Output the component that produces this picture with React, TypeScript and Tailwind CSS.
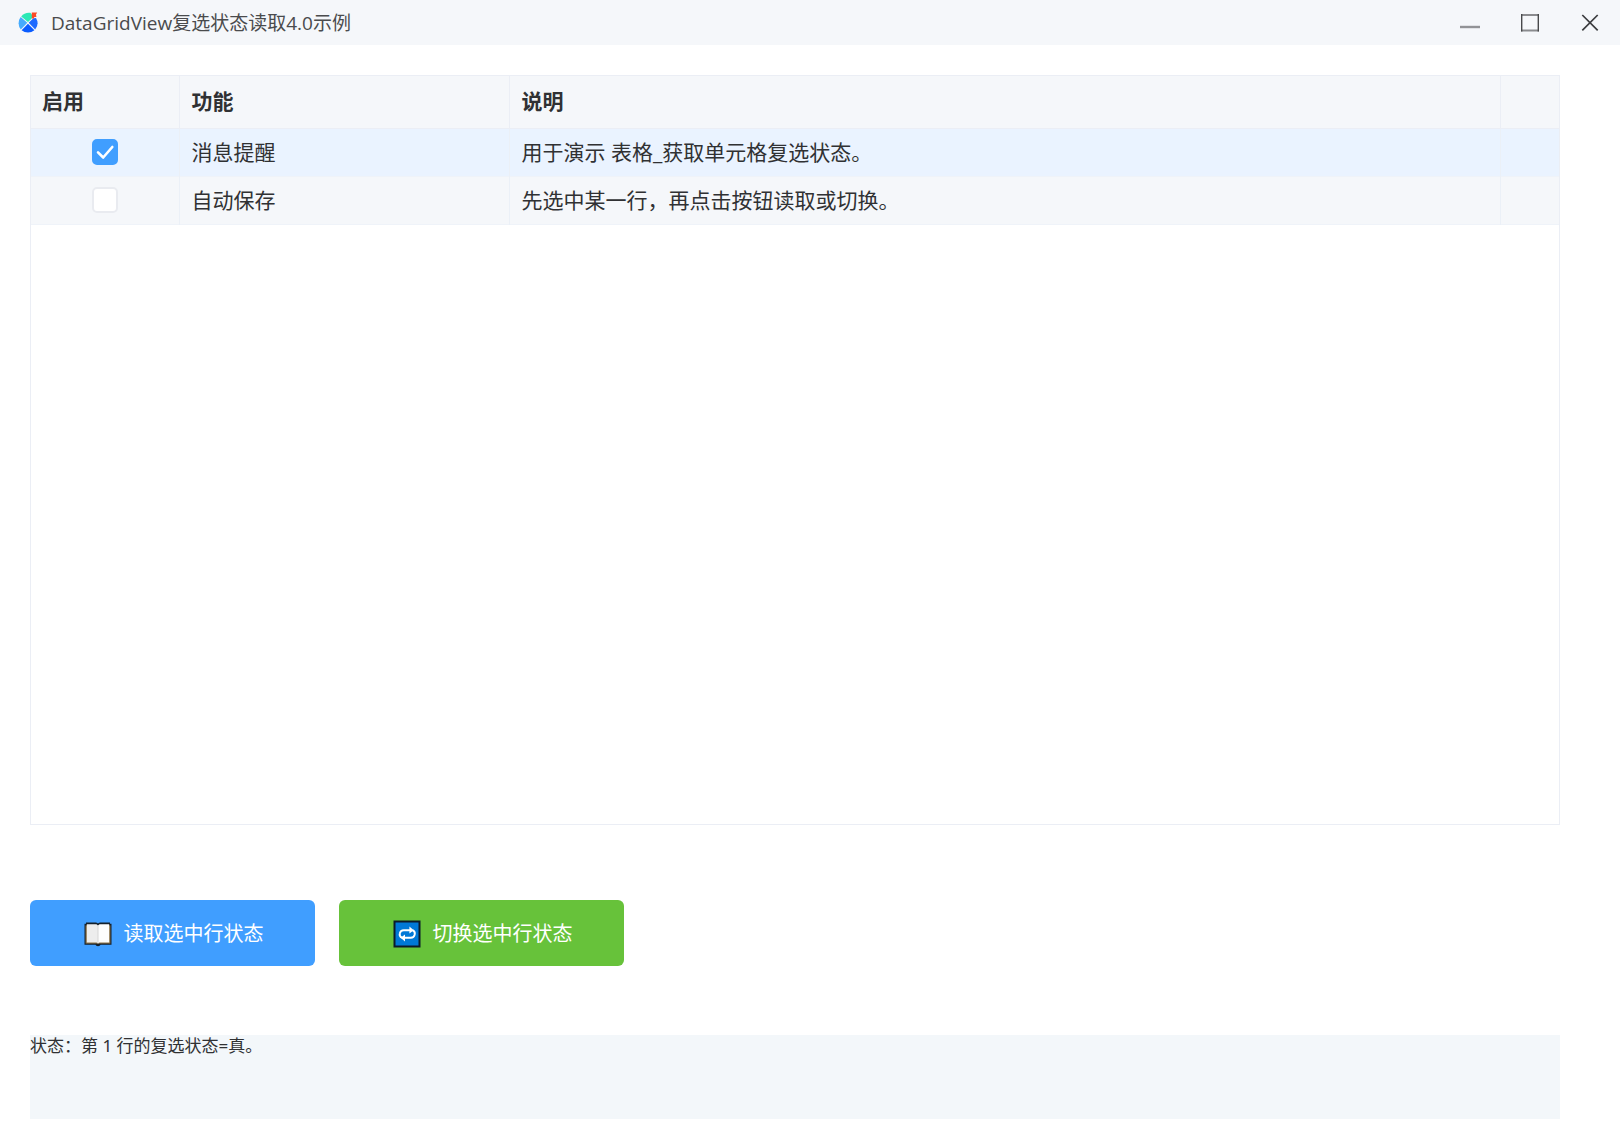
import React, { useState } from "react";

interface Row {
  enabled: boolean;
  name: string;
  desc: string;
}

const initialRows: Row[] = [
  { enabled: true, name: "消息提醒", desc: "用于演示 表格_获取单元格复选状态。" },
  { enabled: false, name: "自动保存", desc: "先选中某一行，再点击按钮读取或切换。" },
];

function AppLogo() {
  return (
    <svg className="w-[22px] h-[22px]" viewBox="0 0 22 22" aria-hidden="true">
      <path d="M11 10 4.200 4.400A10 10 0 0 1 13.400 .8L15.200 3v3z" fill="#2be8b5" />
      <path d="M10.300 10.800 3.800 17.400A10 10 0 0 1 3.700 5z" fill="#45abfd" />
      <path d="M11.700 10.800 16.400 6.200 19 6A10 10 0 0 1 18.200 17.400z" fill="#1f6bff" />
      <path d="M11 11.700 17.400 18.200A10 10 0 0 1 4.600 18.200z" fill="#0a5cff" />
      <path d="M14.800 .6h5.400l-1.200 2 .4 2.400h-2.200v1.400h-2.400z" fill="#fb4a26" />
    </svg>
  );
}

function BookIcon() {
  return (
    <svg className="w-7 h-7" viewBox="0 0 28 28" aria-hidden="true">
      <path
        d="M.5 3.800h1.500V2.600h9.600c1 0 1.900.3 2.400.8.5-.5 1.400-.8 2.400-.8H26v1.200h1.500v21h-11c-.3.900-1.200 1.400-2.500 1.400s-2.200-.5-2.500-1.400H.5z"
        fill="#14202c"
      />
      <path d="M1.600 5.400h24.800v18.200H1.600z" fill="#8a7248" />
      <path d="M2.800 4.200h8.600c1.500 0 2.300.6 2.600 1.600v17.800c-.4-.7-1.200-1.100-2.600-1.100H2.800z" fill="#ededed" />
      <path d="M25.200 4.200h-8.600c-1.500 0-2.300.6-2.600 1.600v17.800c.4-.7 1.200-1.100 2.600-1.100h8.600z" fill="#fdfdfd" />
      <path d="M14 5.800v17.400" stroke="#d5d5d5" strokeWidth="1" />
    </svg>
  );
}

function RepeatIcon() {
  return (
    <svg className="w-7 h-7" viewBox="0 0 28 28" fill="none" aria-hidden="true">
      <rect x="1.500" y="1.500" width="25" height="25" fill="#0078d7" stroke="#0b1a2a" strokeWidth="2" />
      <path
        d="M9 17.800c-2.200-1.200-2.600-3-2.200-4.400.4-1.800 1.800-3.200 4-3.200h7M19.500 10.200c2.200 1.200 2.600 3 2.200 4.400-.4 1.800-1.800 3.200-4 3.200h-7"
        stroke="#fff"
        strokeWidth="1.900"
      />
      <path d="M16.400 6.400 20.800 10.200 16.400 13.600zM12 14.400 7.600 17.800 12 21.600z" fill="#fff" />
    </svg>
  );
}

export default function App() {
  const [rows, setRows] = useState(initialRows);
  const [selected, setSelected] = useState(0);
  const [status, setStatus] = useState("状态：第 1 行的复选状态=真。");

  const report = (index: number, enabled: boolean) => {
    setStatus(`状态：第 ${index + 1} 行的复选状态=${enabled ? "真" : "假"}。`);
  };

  const toggle = (index: number) => {
    setRows(rows.map((row, i) => (i === index ? { ...row, enabled: !row.enabled } : row)));
  };

  const handleToggle = () => {
    toggle(selected);
    report(selected, !rows[selected].enabled);
  };

  return (
    <div className="min-h-screen flex flex-col bg-white text-[#303133] font-['Noto_Sans','Noto_Sans_CJK_SC',sans-serif]">
      <header className="h-[45px] flex items-center justify-between bg-[#f5f7fa] pl-[17px]">
        <div className="flex items-center gap-3">
          <AppLogo />
          <h1 className="text-[19px] leading-7 text-[#4a4b4d] font-['Open_Sans','Noto_Sans_CJK_SC',sans-serif]">
            DataGridView复选状态读取4.0示例
          </h1>
        </div>
        <div className="flex text-[#303133]">
          <button aria-label="最小化" className="w-[60px] h-[45px] flex items-center justify-center hover:bg-gray-200">
            <svg className="w-6 h-6" viewBox="0 0 24 24">
              <path d="M2 16h20" stroke="#929396" strokeWidth="2.400" />
            </svg>
          </button>
          <button aria-label="最大化" className="w-[60px] h-[45px] flex items-center justify-center hover:bg-gray-200">
            <svg className="w-6 h-6" viewBox="0 0 24 24" fill="none">
              <path d="M3 4h18M3 19.500h18" stroke="#8a8b8e" strokeWidth="2" />
              <path d="M3.700 3v17.500M20.300 3v17.500" stroke="#48494b" strokeWidth="1.400" />
            </svg>
          </button>
          <button aria-label="关闭" className="w-[60px] h-[45px] flex items-center justify-center hover:bg-red-200">
            <svg className="w-6 h-6" viewBox="0 0 24 24" fill="none">
              <path d="M4.300 4l15.400 15.400M19.700 4L4.300 19.400" stroke="#3c3d3f" strokeWidth="1.700" />
            </svg>
          </button>
        </div>
      </header>

      <main className="flex-1 flex flex-col pt-[30px] pb-[21px] pl-[30px] pr-[60px]">
        <div className="flex-1 border border-[#ebeef5]">
          <table className="w-full table-fixed border-collapse text-left text-[21px] leading-7">
            <colgroup>
              <col className="w-[148px]" />
              <col className="w-[330px]" />
              <col />
              <col className="w-[59px]" />
            </colgroup>
            <thead>
              <tr className="h-[52px] bg-[#f5f7fa] border-b border-[#ebeef5]">
                <th className="px-[11px] pb-0.5 font-bold border-r border-[#ebeef5]">启用</th>
                <th className="px-3 pb-0.5 font-bold border-r border-[#ebeef5]">功能</th>
                <th className="px-3 pb-0.5 font-bold border-r border-[#ebeef5]">说明</th>
                <td />
              </tr>
            </thead>
            <tbody>
              {rows.map((row, i) => (
                <tr
                  key={row.name}
                  onClick={() => setSelected(i)}
                  className={`h-[48px] border-b border-[#eff3f9] ${i === selected ? "bg-[#eaf3ff]" : "bg-[#f5f7fa]"}`}
                >
                  <td className="border-r border-[#ebf0f7]">
                    <label className="relative block w-[26px] h-[26px] mx-auto">
                      <input
                        type="checkbox"
                        aria-label={row.name}
                        checked={row.enabled}
                        onChange={() => toggle(i)}
                        className="peer block appearance-none w-[26px] h-[26px] rounded-[5px] border-2 border-[#e9ebf0] bg-white checked:bg-[#409eff] checked:border-[#409eff]"
                      />
                      <svg
                        className="absolute inset-0 w-[26px] h-[26px] pointer-events-none opacity-0 peer-checked:opacity-100"
                        viewBox="0 0 26 26"
                        fill="none"
                      >
                        <path d="M6 13.300l5.200 5.200L20.300 8" stroke="#fff" strokeWidth="2.600" strokeLinecap="round" strokeLinejoin="round" />
                      </svg>
                    </label>
                  </td>
                  <td className="px-3 border-r border-[#ebf0f7]">{row.name}</td>
                  <td className="px-3 border-r border-[#ebf0f7]">{row.desc}</td>
                  <td />
                </tr>
              ))}
            </tbody>
          </table>
        </div>

        <div className="mt-[75px] flex gap-6 text-[20px] text-white">
          <button
            onClick={() => report(selected, rows[selected].enabled)}
            className="w-[285px] h-[66px] pl-0.5 pt-0.5 flex items-center justify-center gap-3 rounded-md bg-[#409eff] hover:bg-[#66b1ff]"
          >
            <BookIcon />
            读取选中行状态
          </button>
          <button
            onClick={handleToggle}
            className="w-[285px] h-[66px] pl-0.5 pt-0.5 flex items-center justify-center gap-3 rounded-md bg-[#67c23a] hover:bg-[#85ce61]"
          >
            <RepeatIcon />
            切换选中行状态
          </button>
        </div>

        <p className="mt-[69px] min-h-[84px] bg-[#f3f7fa] text-[17px] leading-[22px]">{status}</p>
      </main>
    </div>
  );
}
